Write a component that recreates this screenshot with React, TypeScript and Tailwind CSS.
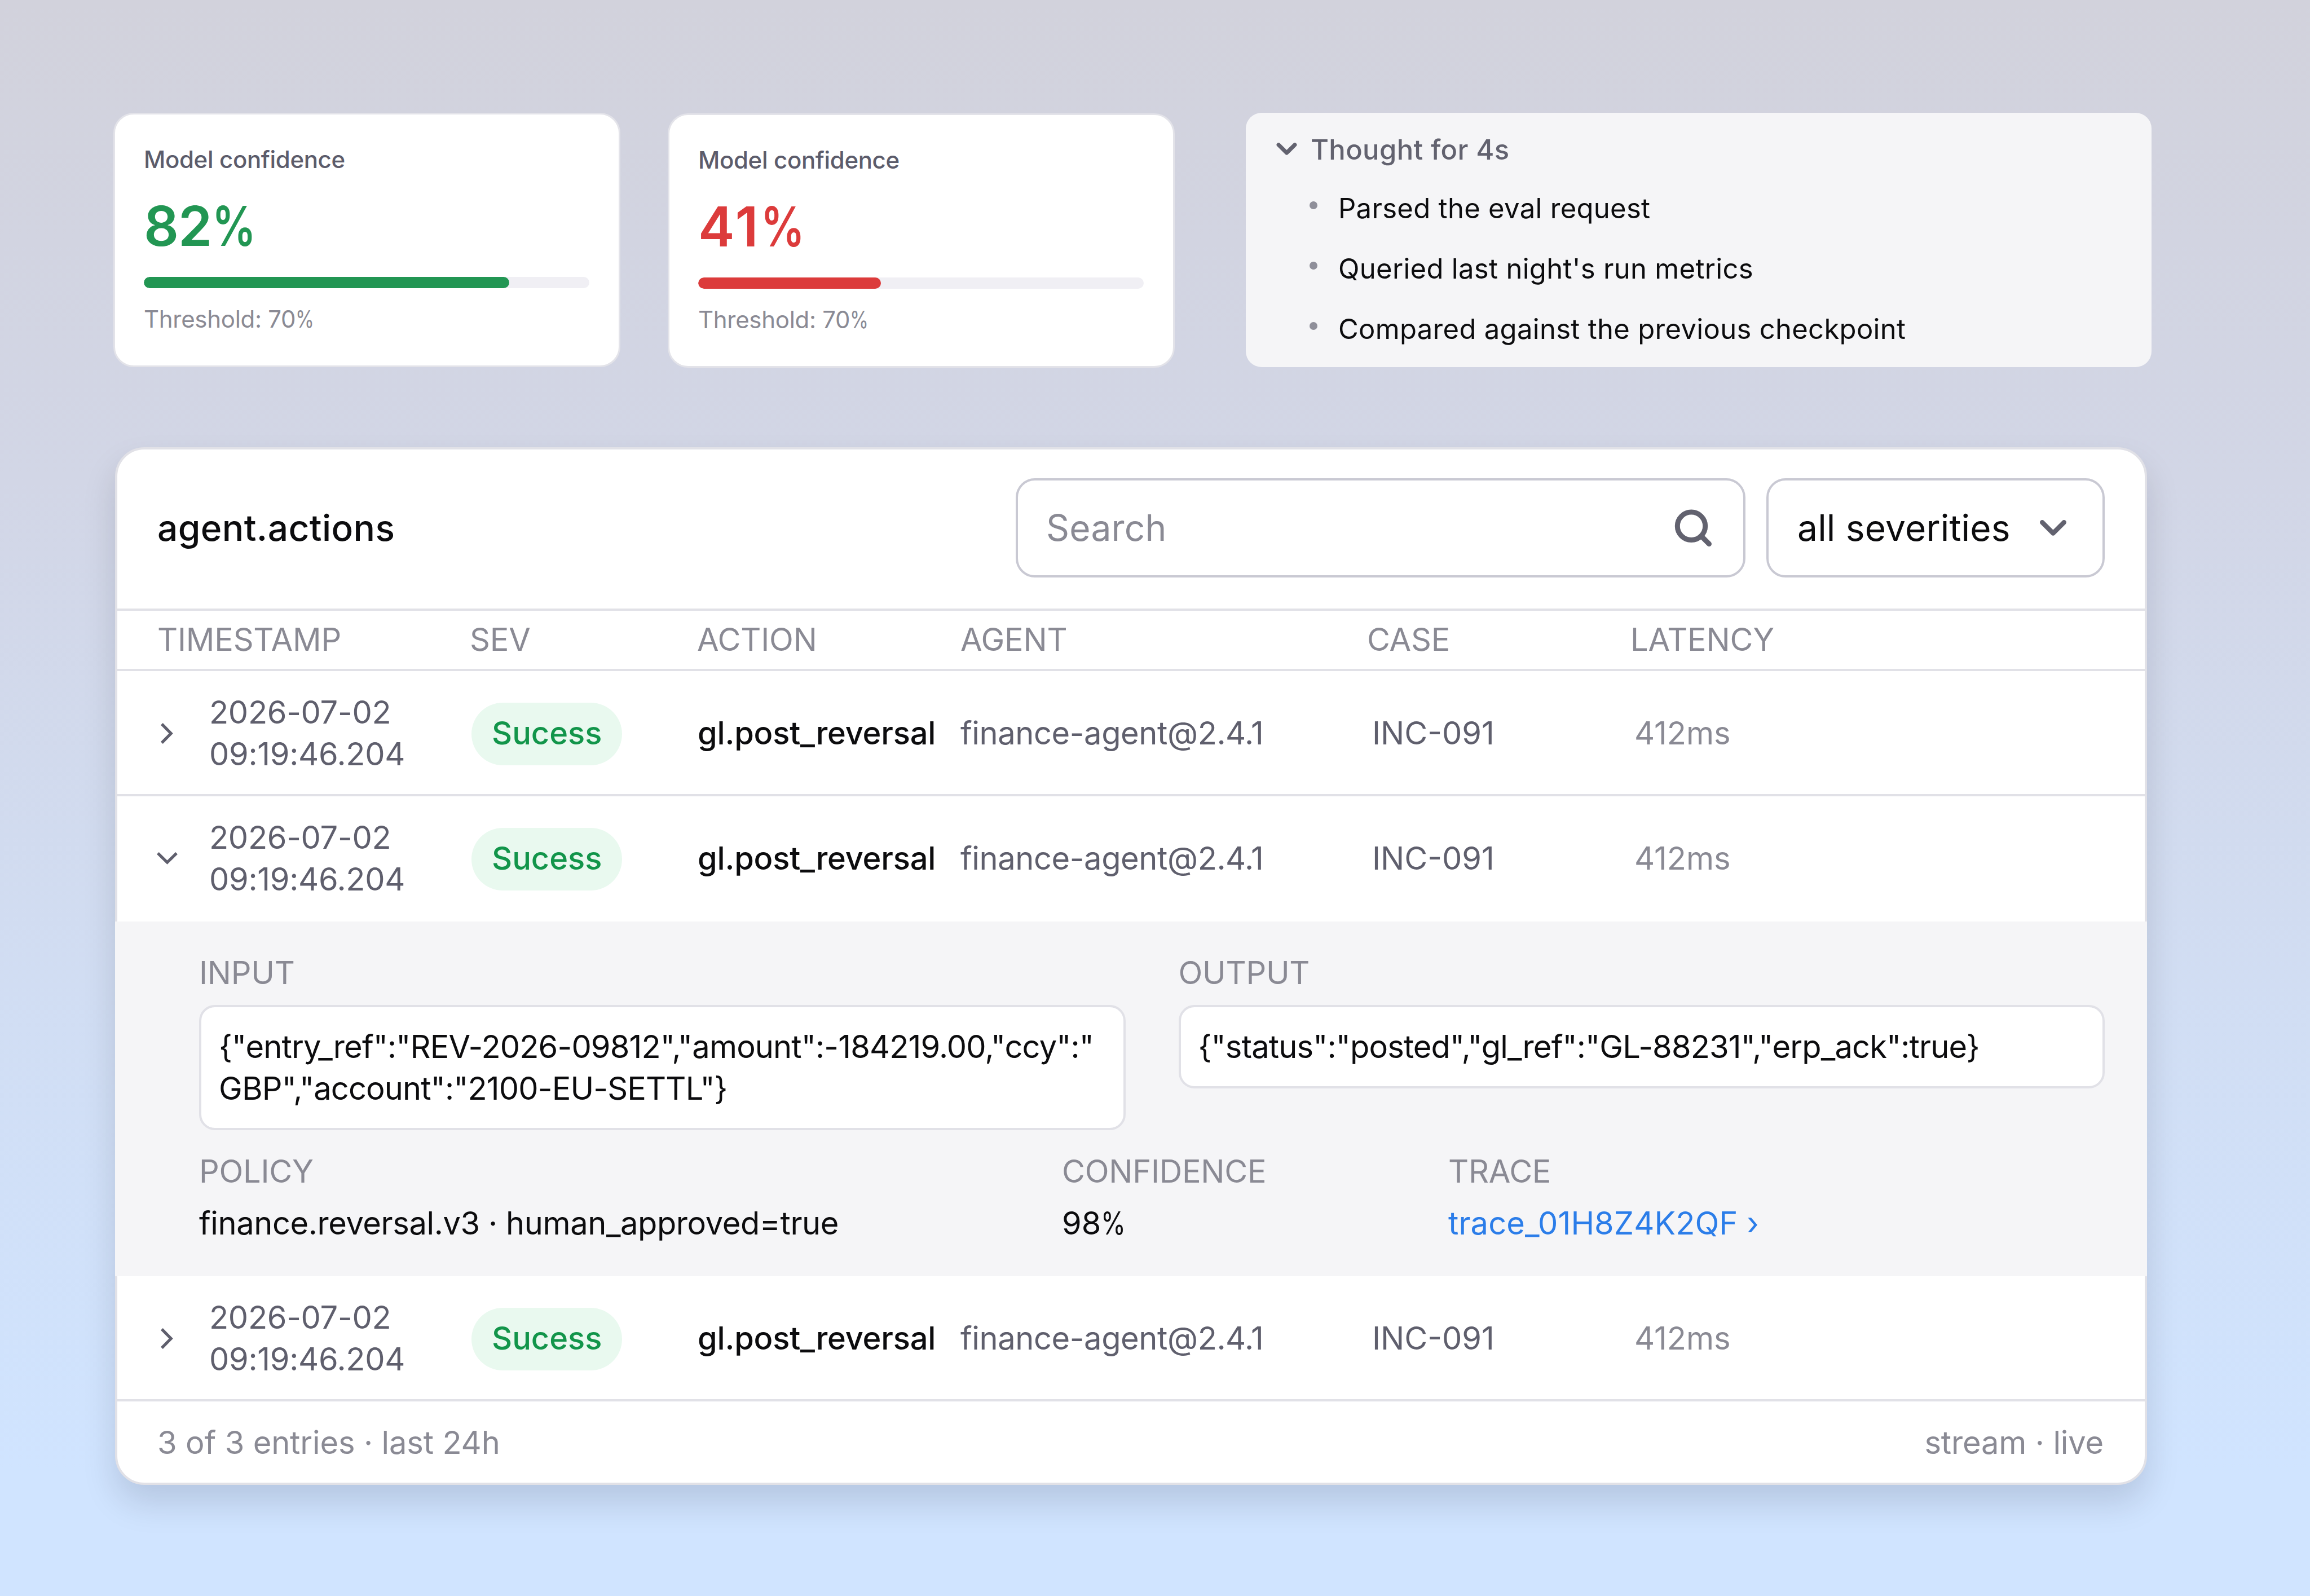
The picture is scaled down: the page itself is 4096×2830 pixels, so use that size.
import React from 'react';

interface Column {
  label: string;
  className: string;
}

interface AgentAction {
  id: number;
  date: string;
  time: string;
  severity: string;
  action: string;
  agent: string;
  caseId: string;
  latency: string;
  open?: boolean;
}

const columns: Column[] = [
  { label: 'TIMESTAMP', className: 'w-[554px]' },
  { label: 'SEV', className: 'w-[403px]' },
  { label: 'ACTION', className: 'w-[467px]' },
  { label: 'AGENT', className: 'w-[721px]' },
  { label: 'CASE', className: 'w-[467px]' },
  { label: 'LATENCY', className: 'w-[400px]' },
];

const base = {
  date: '2026-07-02',
  time: '09:19:46.204',
  severity: 'Sucess',
  action: 'gl.post_reversal',
  agent: 'finance-agent@2.4.1',
  caseId: 'INC-091',
  latency: '412ms',
};

const actions: AgentAction[] = [
  { id: 1, ...base },
  { id: 2, ...base, open: true },
  { id: 3, ...base },
];

const thoughts = [
  'Parsed the eval request',
  "Queried last night's run metrics",
  'Compared against the previous checkpoint',
];

const toneStyles = {
  good: { text: 'text-[#229653] tracking-[-1px]', bar: 'bg-[#229653]' },
  bad: { text: 'text-[#dc3b3b] tracking-[4px]', bar: 'bg-[#dc3b3b]' },
};

const ChevronDown = ({ className, strokeWidth = 8.3 }: { className: string; strokeWidth?: number }) => (
  <svg className={className} viewBox="0 0 47 28" fill="none" stroke="currentColor" strokeWidth={strokeWidth} strokeLinecap="round" strokeLinejoin="round" overflow="visible">
    <path d="M4.2 4.2L23.5 23.5L42.8 4.2" />
  </svg>
);

// narrow percent sign
const Percent = () => <span className="inline-block origin-left scale-x-[0.8]">%</span>;

const ConfidenceCard = ({ value, tone }: { value: number; tone: 'good' | 'bad' }) => (
  <section className="w-[899px] h-[451px] rounded-[36px] border-[3px] border-[#e3e3e9] bg-white pl-[51px] pr-[52px] pt-[50px]">
    <h3 className="text-[42px] leading-[60px] font-[450] tracking-[-0.35px] text-[#5c5c6b]">Model confidence</h3>
    <p className={`mt-[30px] text-[97px] leading-[116px] font-semibold ${toneStyles[tone].text}`}>
      {value}<Percent />
    </p>
    <div className="mt-[32px] h-5 rounded-full bg-[#f0eff4] overflow-hidden">
      <div className={`h-full rounded-full ${toneStyles[tone].bar}`} style={{ width: `${value}%` }} />
    </div>
    <p className="mt-[25px] text-[42px] leading-[60px] tracking-[-0.3px] text-[#8a8a94]">Threshold: 70<Percent /></p>
  </section>
);

const ThoughtPanel = () => (
  <section className="w-[1606px] h-[451px] rounded-[28px] bg-[#f5f5f7] pl-[55px] pt-[31px]">
    <div className="flex items-center gap-[25px] h-[70px] text-[#62626f]">
      <ChevronDown className="w-[35px] h-[22px] -mt-1" strokeWidth={9.6} />
      <span className="text-[49px] font-medium tracking-[0.35px]">Thought for 4s</span>
    </div>
    <ul className="pl-[58px] pt-[15px]">
      {thoughts.map(text => (
        <li key={text} className="flex items-center h-[107px] gap-[37px]">
          <span className="size-[14px] rounded-full bg-[#8f8f9a] -mt-3" />
          <span className="text-[49px] tracking-[0.3px] text-[#0c0c0e]">{text}</span>
        </li>
      ))}
    </ul>
  </section>
);

const Field = ({ label, children, className }: { label: string; children: React.ReactNode; className: string }) => (
  <div className={className}>
    <div className="text-[56px] leading-[74px] tracking-[-0.25px] text-[#8a8a94]">{label}</div>
    {children}
  </div>
);

const Payload = ({ json }: { json: string }) => (
  <div className="mt-[20px] rounded-[28px] border-4 border-[#e1e1e7] bg-white pl-[31px] py-[33px] text-[56px] leading-[74px] tracking-[-0.85px] whitespace-pre">
    {json}
  </div>
);

const ActionDetails = () => (
  <div className="-mx-1 h-[629px] bg-[#f5f5f7] pl-[149px] pr-[75px] pt-[54px] text-[#0c0c0e]">
    <div className="grid grid-cols-2 gap-[94px] items-start h-[352px]">
      <Field label="INPUT" className="min-w-0">
        <Payload json={'{"entry_ref":"REV-2026-09812","amount":-184219.00,"ccy":"\nGBP","account":"2100-EU-SETTL"}'} />
      </Field>
      <Field label="OUTPUT" className="min-w-0">
        <Payload json={'{"status":"posted","gl_ref":"GL-88231","erp_ack":true}'} />
      </Field>
    </div>
    <div className="flex">
      <Field label="POLICY" className="w-[1530px]">
        <p className="mt-[18px] text-[56px] leading-[74px] tracking-[-0.4px]">finance.reversal.v3 · human_approved=true</p>
      </Field>
      <Field label="CONFIDENCE" className="w-[685px]">
        <p className="mt-[18px] text-[56px] leading-[74px]">98<Percent /></p>
      </Field>
      <Field label="TRACE" className="flex-1">
        <a className="mt-[18px] block text-[56px] leading-[74px] tracking-[0.1px] text-[#2b7de9]">trace_01H8Z4K2QF ›</a>
      </Field>
    </div>
  </div>
);

const ActionRow = ({ item }: { item: AgentAction }) => (
  <div className={`flex items-center h-[222px] pl-[72px] text-[56px] leading-[74px] text-[#5f5f6d] ${item.open ? 'pb-[2px]' : 'border-b-4 border-[#e1e1e7] pt-[2px]'}`}>
    <div className="w-[556px] flex items-center">
      <div className="w-[91px]">
        {item.open ? (
          <svg className="w-[37px] h-[22px] -ml-[2px]" viewBox="0 0 37 22" fill="none" stroke="currentColor" strokeWidth="5.2">
            <path d="M1.9 1.9L18.5 18.2L35.1 1.9" />
          </svg>
        ) : (
          <svg className="w-[22px] h-[37px] ml-[5px]" viewBox="0 0 22 37" fill="none" stroke="currentColor" strokeWidth="5.2">
            <path d="M1.9 1.9L18.2 18.5L1.9 35.1" />
          </svg>
        )}
      </div>
      <div className="tracking-[-0.3px]">
        <div>{item.date}</div>
        <div>{item.time}</div>
      </div>
    </div>
    <div className="w-[401px] pt-[2px]">
      <span className="inline-flex items-center h-[111px] px-[36px] pb-[2px] rounded-full bg-[#e9f9ef] font-medium text-[#12954a]">{item.severity}</span>
    </div>
    <div className="w-[466px] font-medium tracking-[-0.2px] text-[#0c0c0e]">{item.action}</div>
    <div className="w-[730px] tracking-[-0.4px]">{item.agent}</div>
    <div className="w-[465px]">{item.caseId}</div>
    <div className="text-[#8a8a94]">{item.latency}</div>
  </div>
);

const ActionsTable = () => (
  <section className="w-[3603px] h-[1840px] rounded-[52px] border-4 border-[#e1e1e7] bg-white shadow-[0_32px_60px_rgba(5,10,25,0.13)]">
    <header className="flex items-center h-[286px] border-b-4 border-[#e1e1e7] pl-[71px] pr-[71px] pb-1">
      <h2 className="flex-1 text-[64px] font-medium tracking-[0.4px] text-[#0c0c0e]">agent.actions</h2>
      <div className="flex items-center justify-between w-[1294px] h-[176px] rounded-[34px] border-4 border-[#c9c9d3] pl-[50px] pr-[53px] text-[64px] tracking-[0.2px] text-[#8a8a94]">
        Search
        <svg className="size-[72px] text-[#62626f]" viewBox="0 0 72 72" fill="none" stroke="currentColor" strokeWidth="9" strokeLinecap="round">
          <circle cx="33" cy="32.8" r="24.7" />
          <path d="M51 51l13.5 13.5" />
        </svg>
      </div>
      <div className="flex items-center justify-between ml-[37px] w-[600px] h-[176px] rounded-[34px] border-4 border-[#c9c9d3] pl-[51px] pr-[64px] text-[64px] tracking-[0.2px] text-[#0c0c0e]">
        all severities
        <ChevronDown className="w-[47px] h-[28px] text-[#62626f]" />
      </div>
    </header>
    <div className="flex items-center h-[107px] border-b-4 border-[#e1e1e7] pl-[71px] pb-[2px] text-[56px] leading-[74px] tracking-[-0.2px] text-[#8a8a94]">
      {columns.map(col => (
        <div key={col.label} className={col.className}>{col.label}</div>
      ))}
    </div>
    {actions.map(item => (
      <React.Fragment key={item.id}>
        <ActionRow item={item} />
        {item.open && <ActionDetails />}
      </React.Fragment>
    ))}
    <footer className="flex items-center justify-between h-[144px] pl-[71px] pr-[73px] pt-[2px] text-[56px] tracking-[-0.15px] text-[#8a8a94]">
      <span>3 of 3 entries · last 24h</span>
      <span>stream · live</span>
    </footer>
  </section>
);

export default function App() {
  return (
    <main className="w-[4096px] h-[2830px] overflow-hidden bg-[linear-gradient(180deg,#d2d2dc_0%,#d2d6e6_30%,#d0e4ff_92%)] pl-[201px] pt-[200px] [font-family:Inter,sans-serif]">
      <div className="flex">
        <ConfidenceCard value={82} tone="good" />
        <div className="ml-[84px] mt-px -mb-px">
          <ConfidenceCard value={41} tone="bad" />
        </div>
        <div className="ml-[126px]">
          <ThoughtPanel />
        </div>
      </div>
      <div className="mt-[142px] ml-[3px]">
        <ActionsTable />
      </div>
    </main>
  );
}
